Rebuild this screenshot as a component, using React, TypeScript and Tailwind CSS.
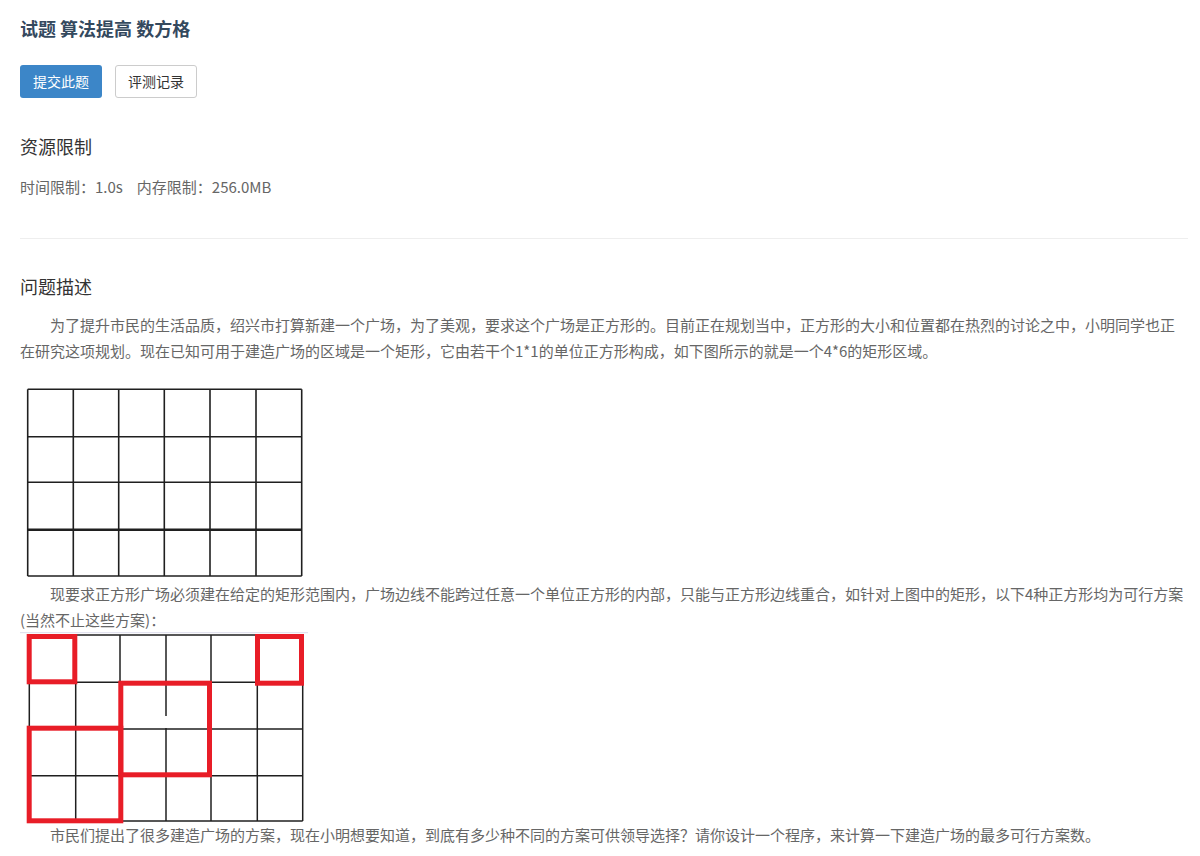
import React from "react";

const g1x = [1.7, 47.3, 92.7, 138.3, 184, 230, 275.7];
const g1y = [1.3, 48.7, 94.3, 141.7, 188];
const g2x = [9.3, 55.7, 100, 146, 191, 237.3, 282.7];
const g2y = [3, 50.3, 97, 143.7, 189];

function Grid1() {
  return (
    <svg width="278" height="190" className="block ml-[6px] mt-[24px]" viewBox="0 0 278 190">
      {g1x.map((x, i) => (
        <line key={"x" + i} x1={x} y1={g1y[0]} x2={x} y2={g1y[4]} stroke="#1f1f1f" strokeWidth="1.6" />
      ))}
      {g1y.map((y, i) => (
        <line key={"y" + i} x1={g1x[0]} y1={y} x2={g1x[6]} y2={y} stroke="#1f1f1f" strokeWidth={i === 3 ? 2.6 : 1.6} />
      ))}
    </svg>
  );
}

function Grid2() {
  const red = "#e81d27";
  return (
    <svg width="290" height="190" className="block overflow-visible -mt-[1px]" viewBox="0 0 290 190">
      <line x1="0" y1="0.7" x2="288" y2="0.7" stroke="#dcdcec" strokeWidth="1" />
      {g2x.map((x, i) => (
        <line key={"x" + i} x1={x} y1={g2y[0]} x2={x} y2={g2y[4]} stroke="#1f1f1f" strokeWidth="1.5" />
      ))}
      {g2y.map((y, i) => (
        <line key={"y" + i} x1={g2x[0]} y1={y} x2={g2x[6]} y2={y} stroke="#1f1f1f" strokeWidth="1.5" />
      ))}
      <line x1="146" y1="84" x2="146" y2="96" stroke="#ffffff" strokeWidth="2" />
      <rect x="9.2" y="4.5" width="45.6" height="45.3" fill="none" stroke={red} strokeWidth="5" />
      <rect x="237.5" y="4.5" width="44" height="46.7" fill="none" stroke={red} strokeWidth="5" />
      <rect x="100.8" y="51.2" width="88.7" height="91.6" fill="none" stroke={red} strokeWidth="5" />
      <rect x="9.2" y="96.2" width="91.6" height="92.6" fill="none" stroke={red} strokeWidth="5" />
    </svg>
  );
}

export default function App() {
  return (
    <div className="w-[1200px] min-h-[856px] bg-white pl-5 pr-3 font-['Noto_Sans_CJK_SC','Noto_Sans',sans-serif]">
      <h1 className="pt-[16px] text-[18px] leading-[24px] font-bold text-[#34495e]">试题 算法提高 数方格</h1>
      <div className="mt-[25px] flex gap-[13px]">
        <button className="h-[33px] w-[82px] rounded-[3px] bg-[#3c86c8] text-[14px] text-white">提交此题</button>
        <button className="h-[33px] w-[82px] rounded-[3px] border border-[#cccccc] bg-white text-[14px] text-[#333333]">评测记录</button>
      </div>
      <h2 className="mt-[36px] text-[18px] leading-[24px] text-[#333333]">资源限制</h2>
      <div className="mt-[19px] text-[15px] leading-[20px] text-[#666666]">
        <span>时间限制：1.0s</span>
        <span className="ml-[14px]">内存限制：256.0MB</span>
      </div>
      <div className="mt-[41px] border-t border-[#eeeeee]" />
      <h2 className="mt-[35px] text-[18px] leading-[24px] text-[#333333]">问题描述</h2>
      <div className="text-[15px] leading-[26px] text-[#666666]">
        <p className="mt-[14px] indent-[30px]">
          为了提升市民的生活品质，绍兴市打算新建一个广场，为了美观，要求这个广场是正方形的。目前正在规划当中，正方形的大小和位置都在热烈的讨论之中，小明同学也正在研究这项规划。现在已知可用于建造广场的区域是一个矩形，它由若干个1*1的单位正方形构成，如下图所示的就是一个4*6的矩形区域。
        </p>
        <Grid1 />
        <p className="mt-[3px] indent-[30px]">
          现要求正方形广场必须建在给定的矩形范围内，广场边线不能跨过任意一个单位正方形的内部，只能与正方形边线重合，如针对上图中的矩形，以下4种正方形均为可行方案(当然不止这些方案)：
        </p>
        <Grid2 />
        <p className="indent-[30px]">
          市民们提出了很多建造广场的方案，现在小明想要知道，到底有多少种不同的方案可供领导选择？请你设计一个程序，来计算一下建造广场的最多可行方案数。
        </p>
      </div>
    </div>
  );
}
